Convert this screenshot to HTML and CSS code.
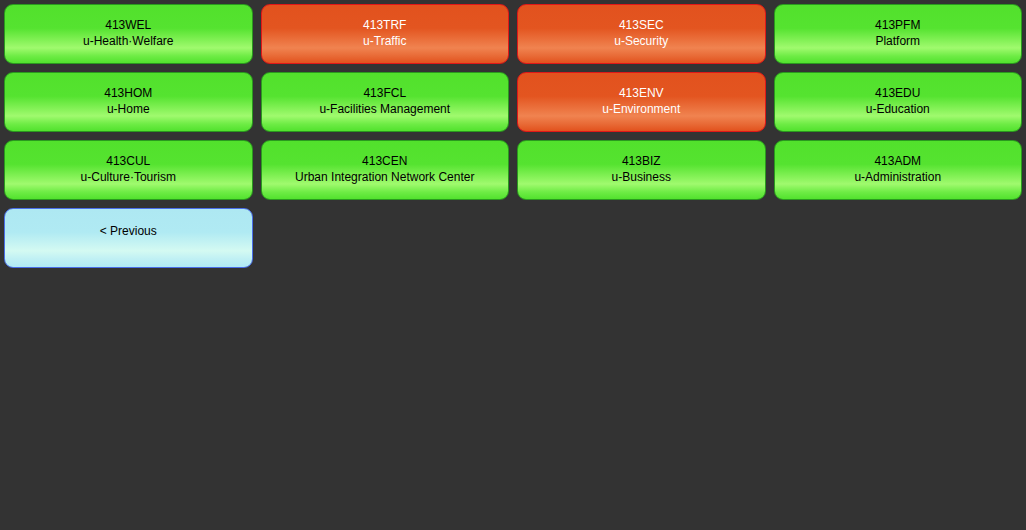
FILE: index.html
```html
<!DOCTYPE html>
<html lang="en">
<head>
    <meta charset="UTF-8">
    <title>413 Menu</title>
    <link rel="stylesheet" href="styles.css">
</head>
<body>
    <div class="menu">
        <button class="tile green"><span>413WEL</span><span>u-Health·Welfare</span></button>
        <button class="tile red"><span>413TRF</span><span>u-Traffic</span></button>
        <button class="tile red"><span>413SEC</span><span>u-Security</span></button>
        <button class="tile green"><span>413PFM</span><span>Platform</span></button>
        <button class="tile green"><span>413HOM</span><span>u-Home</span></button>
        <button class="tile green"><span>413FCL</span><span>u-Facilities Management</span></button>
        <button class="tile red"><span>413ENV</span><span>u-Environment</span></button>
        <button class="tile green"><span>413EDU</span><span>u-Education</span></button>
        <button class="tile green"><span>413CUL</span><span>u-Culture·Tourism</span></button>
        <button class="tile green"><span>413CEN</span><span>Urban Integration Network Center</span></button>
        <button class="tile green"><span>413BIZ</span><span>u-Business</span></button>
        <button class="tile green"><span>413ADM</span><span>u-Administration</span></button>
        <button class="tile blue prev"><span>&lt; Previous</span></button>
    </div>
</body>
</html>
```

FILE: styles.css
```css
body {
    margin: 0;
    background-color: #333333;
    font-family: "Liberation Sans", Arial, sans-serif;
    height: 100vh;
}
.menu {
    display: grid;
    grid-template-columns: repeat(4, 1fr);
    column-gap: 8px;
    row-gap: 8px;
    padding: 4px 4px 0 4px;
}
.tile {
    height: 60px;
    border-radius: 9px;
    border: 1px solid #2a9a1e;
    display: flex;
    flex-direction: column;
    align-items: center;
    justify-content: flex-start;
    padding: 12px 4px 0;
    font-family: inherit;
    font-size: 12px;
    line-height: 16px;
    color: #000;
    cursor: pointer;
}
.green {
    background: linear-gradient(to bottom, #52e12c 0%, #55e330 40%, #a0fa6e 74%, #6eec45 88%, #52e22e 100%);
    border-color: #2a9a1e;
}
.red {
    background: linear-gradient(to bottom, #e2521e 0%, #e35520 40%, #f08350 74%, #e86a36 88%, #e2521e 100%);
    border-color: #e01818;
    color: #fff;
}
.blue {
    background: linear-gradient(to bottom, #aee8f2 0%, #b0eaf3 40%, #d4faf2 72%, #c0f0f4 86%, #b0eaf5 100%);
    border-color: #4a6ee8;
}
.prev {
    padding-top: 14px;
}
```
